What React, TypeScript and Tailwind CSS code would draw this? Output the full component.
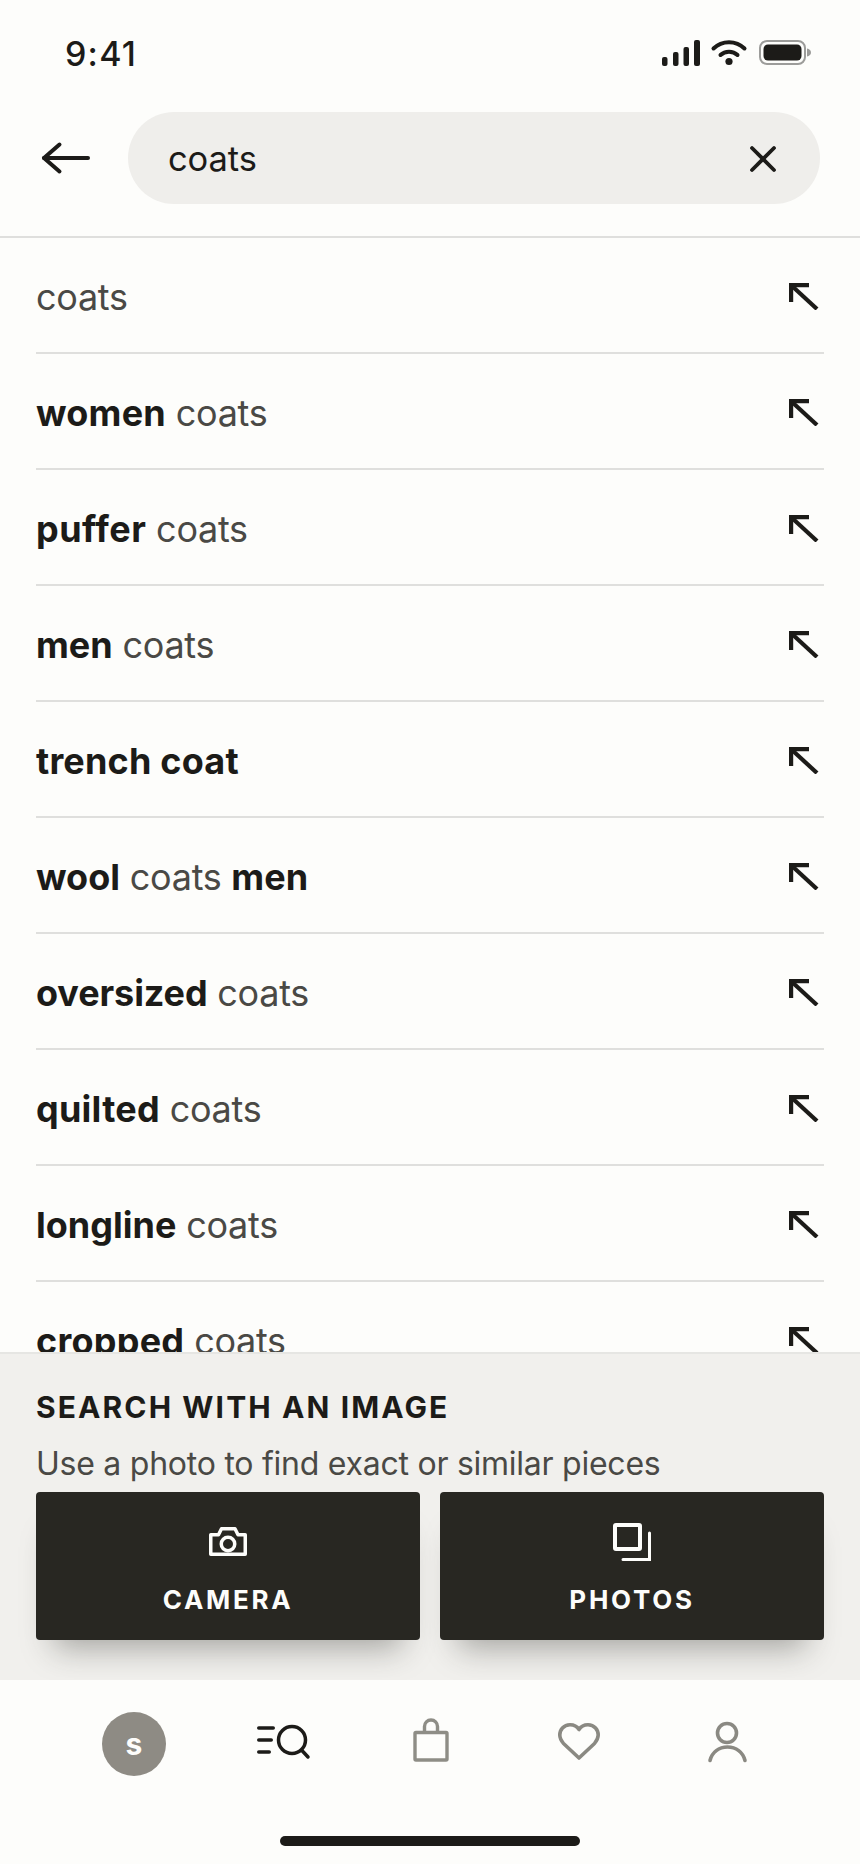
import React from "react";

type Part = { text: string; bold?: boolean; track?: string };

const rows: Part[][] = [
  [{ text: "coats" }],
  [{ text: "women", bold: true, track: "tracking-[0.2px]" }, { text: " coats" }],
  [{ text: "puffer", bold: true, track: "tracking-[0.45px]" }, { text: " coats" }],
  [{ text: "men", bold: true }, { text: " coats" }],
  [{ text: "trench coat", bold: true, track: "tracking-[0.2px]" }],
  [{ text: "wool", bold: true }, { text: " coats " }, { text: "men", bold: true }],
  [{ text: "oversized", bold: true, track: "tracking-[-0.1px]" }, { text: " coats" }],
  [{ text: "quilted", bold: true, track: "tracking-[0.25px]" }, { text: " coats" }],
  [{ text: "longline", bold: true }, { text: " coats" }],
  [{ text: "cropped", bold: true, track: "tracking-[0.25px]" }, { text: " coats" }],
];

function StatusIcons() {
  return (
    <svg width="150" height="28" viewBox="0 0 150 28" className="block">
      <g fill="#1c1b18">
        <rect x="0" y="17" width="5.5" height="9" rx="2" />
        <rect x="11" y="12" width="5.5" height="14" rx="2" />
        <rect x="21.5" y="7" width="5.5" height="19" rx="2" />
        <rect x="32" y="0" width="6" height="26" rx="2" />
        <circle cx="67" cy="21.5" r="3.6" />
      </g>
      <g fill="none" stroke="#1c1b18" strokeWidth="4" strokeLinecap="round">
        <path d="M51.5 8.5C60 0 74 0 82.5 8.5" />
        <path d="M58.5 15C63 10.5 71 10.5 75.5 15" />
      </g>
      <rect x="98" y="1" width="45" height="23" rx="7" fill="none" stroke="#9c9c9a" strokeWidth="2" />
      <rect x="101.5" y="4.5" width="38" height="16" rx="4.5" fill="#1c1b18" />
      <path d="M145 8.5c2.500.6 4 2 4 4s-1.500 3.400-4 4z" fill="#9c9c9a" />
    </svg>
  );
}

function UpLeftArrow() {
  return (
    <svg width="31" height="27" viewBox="0 0 31 27" fill="none" stroke="#1c1b18" strokeWidth="4.2" className="block">
      <path d="M2.100 19V2.100H20" />
      <path d="M3 3L28 26" />
    </svg>
  );
}

function ImageButton({ label, icon }: { label: string; icon: React.ReactNode }) {
  return (
    <button className="flex h-[148px] flex-col items-center rounded-[4px] bg-[#282722] pt-[30px] shadow-[0_26px_30px_-18px_rgba(40,39,34,0.38)]">
      {icon}
      <span className="mt-[22px] text-[26px] leading-[32px] font-bold tracking-[2.7px] text-[#fdfdfb]">{label}</span>
    </button>
  );
}

export default function App() {
  return (
    <div className="flex h-[1864px] w-[860px] flex-col overflow-hidden bg-[#fdfdfb] font-['Inter',sans-serif] text-[#1c1b18]">
      <div className="flex h-[112px] shrink-0 items-start justify-between pt-[39px] pr-[48px] pl-[65px]">
        <span className="text-[34px] leading-[30px] font-medium tracking-[1.2px]">9:41</span>
        <span className="pt-px">
          <StatusIcons />
        </span>
      </div>

      <div className="flex h-[126px] shrink-0 items-start border-b-2 border-[#dfdfdd] pr-[40px] pl-[41px]">
        <button className="flex h-[92px] w-[87px] shrink-0 items-center">
          <svg width="50" height="34" viewBox="0 0 50 34" fill="none" stroke="#1c1b18" strokeWidth="4" strokeLinecap="round" strokeLinejoin="round">
            <path d="M18.500 3.500L3 17L18.500 30.500" />
            <path d="M3 17H47" />
          </svg>
        </button>
        <div className="flex h-[92px] flex-1 items-center justify-between rounded-full bg-[#efeeeb] pt-[2px] pr-[43px] pl-[40px]">
          <span className="text-[34.500px] leading-[40px] tracking-[-0.1px]">coats</span>
          <svg width="28" height="28" viewBox="0 0 28 28" fill="none" stroke="#1c1b18" strokeWidth="3.800" strokeLinecap="round">
            <path d="M3 3L25 25" />
            <path d="M25 3L3 25" />
          </svg>
        </div>
      </div>

      <div className="min-h-0 flex-1 overflow-hidden px-[36px]">
        {rows.map((parts, i) => (
          <div key={i} className="flex h-[116px] items-center justify-between border-b-2 border-[#dfdfdd] pt-[3px] pr-[4px]">
            <span className="text-[36px] leading-[44px] whitespace-pre">
              {parts.map((p, j) =>
                p.bold ? (
                  <span key={j} className={`font-bold text-[#1c1b18] ${p.track ?? ""}`}>{p.text}</span>
                ) : (
                  <span key={j} className="tracking-[-0.3px] text-[#4a4945]">{p.text}</span>
                ),
              )}
            </span>
            <UpLeftArrow />
          </div>
        ))}
      </div>

      <div className="h-[328px] shrink-0 border-t-2 border-[#e6e6e3] bg-[#f1f0ed] px-[36px] pt-[31px]">
        <div className="text-[30px] leading-[44px] font-bold tracking-[2.1px]">SEARCH WITH AN IMAGE</div>
        <div className="mt-[13px] text-[32px] leading-[44px] tracking-[-0.25px] text-[#4a4945]">Use a photo to find exact or similar pieces</div>
        <div className="mt-[6px] grid grid-cols-2 gap-[20px]">
          <ImageButton
            label="CAMERA"
            icon={
              <svg width="44" height="40" viewBox="0 0 44 40" fill="none" stroke="#fdfdfb" strokeWidth="3.500" strokeLinejoin="round">
                <path d="M4.750 12.750H12.500L15.500 6.750H29L32 12.750H39.250V32.250H4.750Z" />
                <circle cx="22" cy="22" r="6.750" />
              </svg>
            }
          />
          <ImageButton
            label="PHOTOS"
            icon={
              <svg width="44" height="40" viewBox="0 0 44 40" fill="none" stroke="#fdfdfb" strokeLinecap="round">
                <rect x="5" y="3" width="25" height="24" rx="1" strokeWidth="4" />
                <path d="M39.500 11V37.500H13" strokeWidth="3" />
              </svg>
            }
          />
        </div>
      </div>

      <div className="relative h-[184px] shrink-0 bg-[#fdfdfb]">
        <div className="grid grid-cols-5 px-[60px] pt-[32px]">
          <div className="flex justify-center">
            <div className="flex h-[64px] w-[64px] items-center justify-center rounded-full bg-[#8e8b84] pb-[1px] text-[30px] leading-none font-bold text-[#fdfdfb]">s</div>
          </div>
          <div className="flex justify-center">
            <svg width="58" height="64" viewBox="0 0 58 64" fill="none" stroke="#1c1b18" strokeWidth="3.500" strokeLinecap="round">
              <path d="M5.750 16H20.250M5.750 28H18.250M5.750 40H16.250" />
              <circle cx="39" cy="28" r="13.500" />
              <path d="M48.500 38L55 45" />
            </svg>
          </div>
          <div className="flex justify-center">
            <svg width="58" height="64" viewBox="0 0 58 64" fill="none" stroke="#8e8d86" strokeWidth="3.400" strokeLinejoin="round">
              <rect x="14" y="20.500" width="32" height="27.500" rx="1" />
              <path d="M23.500 20.500V14.500a6.500 6.500 0 0 1 13 0V20.500" />
            </svg>
          </div>
          <div className="flex justify-center">
            <svg width="58" height="64" viewBox="0 0 58 64" fill="none" stroke="#8a8982" strokeWidth="3.600" strokeLinejoin="round">
              <path d="M30 17.500C27.500 13.500 24 12.800 21 12.800C14.500 12.800 10.800 18 10.800 23C10.800 26.500 12.500 29 14.500 31.500L30 46L45.500 31.500C47.500 29 49.200 26.500 49.200 23C49.200 18 45.500 12.800 39 12.800C36 12.800 32.500 13.500 30 17.500Z" />
            </svg>
          </div>
          <div className="flex justify-center">
            <svg width="58" height="64" viewBox="0 0 58 64" fill="none" stroke="#8a8982" strokeWidth="3.600" strokeLinecap="round">
              <circle cx="30" cy="21" r="9.500" />
              <path d="M13 48.500C15 40 22 35 30.500 35S46 40 48 48.500" />
            </svg>
          </div>
        </div>
        <div className="absolute top-[156px] left-[280px] h-[10px] w-[300px] rounded-full bg-[#1c1b18]" />
      </div>
    </div>
  );
}
